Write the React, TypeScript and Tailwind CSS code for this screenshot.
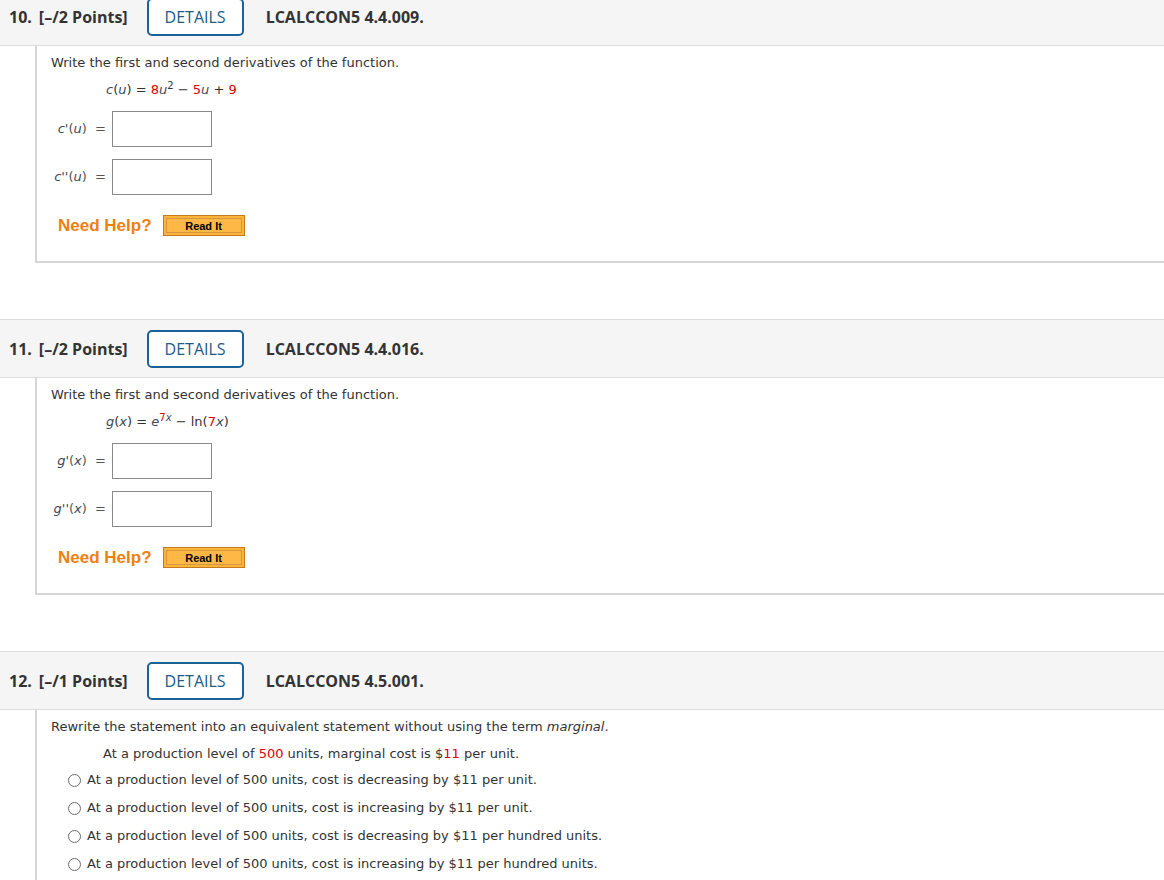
const body = { fontFamily: '"DejaVu Sans", Verdana, sans-serif' }
const head = { fontFamily: '"Open Sans", "Noto Sans", sans-serif' }

function Header({ num, points, code }: { num: string; points: string; code: string }) {
  return (
    <div
      className="h-[59px] flex items-center border-y border-[#dddddd] bg-[#f5f5f5] pl-[9px] text-[16px] font-bold text-[#333333]"
      style={head}
    >
      <span>{num}.</span>
      <span className="ml-[7px]">[–/{points} Points]</span>
      <button className="ml-[19px] h-[38px] w-[97px] rounded-[5px] border-2 border-[#1b6296] bg-white text-[16px] font-medium text-[#1b5a8a]">
        DETAILS
      </button>
      <span className="ml-[22px]">{code}</span>
    </div>
  )
}

function Var({ children }: { children: React.ReactNode }) {
  return <i className="text-[#3d4a5a]">{children}</i>
}

function Red({ children }: { children: React.ReactNode }) {
  return <span className="text-[#e00000]">{children}</span>
}

function AnswerRow({ label }: { label: React.ReactNode }) {
  return (
    <div className="flex items-center">
      <div className="w-[61px] pr-[6px] text-right text-[#555555]">{label}</div>
      <div className="h-[36px] w-[100px] border border-[#8a8a8a] bg-white" />
    </div>
  )
}

function NeedHelp() {
  return (
    <div className="mt-[18px] flex items-center pl-[7px]">
      <span className="text-[17px] font-bold text-[#ee7f11]" style={{ fontFamily: '"Liberation Sans", Arial, sans-serif' }}>
        Need Help?
      </span>
      <button
        className="ml-[11px] h-[21px] w-[82px] border border-[#c57b1c] bg-[#fdb43c] p-[2px]"
        style={{ fontFamily: '"Liberation Sans", Arial, sans-serif' }}
      >
        <div className="flex h-full items-center justify-center border border-[#d89540] bg-[#fdb845] text-[11px] font-bold text-black">
          Read It
        </div>
      </button>
    </div>
  )
}

function DerivQuestion({ fn, first, second }: { fn: React.ReactNode; first: React.ReactNode; second: React.ReactNode }) {
  return (
    <div className="ml-[35px] h-[217px] border-b-2 border-l-2 border-[#d6d6d6] pl-[14px] pt-[8px] text-[13px] text-[#333333]" style={body}>
      <div className="leading-[18px]">Write the first and second derivatives of the function.</div>
      <div className="ml-[55px] mt-[9px] leading-[18px]">{fn}</div>
      <div className="mt-[12px] flex flex-col gap-[12px]">
        <AnswerRow label={first} />
        <AnswerRow label={second} />
      </div>
      <NeedHelp />
    </div>
  )
}

function Radio({ children }: { children: React.ReactNode }) {
  return (
    <div className="flex h-[28px] items-center">
      <span className="ml-[17px] h-[13px] w-[13px] rounded-full border border-[#6b6b6b] bg-white" />
      <span className="ml-[6px]">{children}</span>
    </div>
  )
}

export default function App() {
  return (
    <div className="h-[880px] w-[1164px] overflow-hidden bg-white">
      <div className="-mt-[13px]">
        <Header num="10" points="2" code="LCALCCON5 4.4.009." />
        <DerivQuestion
          fn={
            <>
              <Var>c</Var>(<Var>u</Var>) = <Red>8</Red>
              <Var>u</Var>
              <sup className="text-[10px]">2</sup> − <Red>5</Red>
              <Var>u</Var> + <Red>9</Red>
            </>
          }
          first={
            <>
              <Var>c'</Var>(<Var>u</Var>)&nbsp; =
            </>
          }
          second={
            <>
              <Var>c''</Var>(<Var>u</Var>)&nbsp; =
            </>
          }
        />
        <div className="h-[56px]" />
        <Header num="11" points="2" code="LCALCCON5 4.4.016." />
        <DerivQuestion
          fn={
            <>
              <Var>g</Var>(<Var>x</Var>) = <Var>e</Var>
              <sup className="text-[10px]">
                <Red>7</Red>
                <Var>x</Var>
              </sup>{' '}
              − ln(<Red>7</Red>
              <Var>x</Var>)
            </>
          }
          first={
            <>
              <Var>g'</Var>(<Var>x</Var>)&nbsp; =
            </>
          }
          second={
            <>
              <Var>g''</Var>(<Var>x</Var>)&nbsp; =
            </>
          }
        />
        <div className="h-[56px]" />
        <Header num="12" points="1" code="LCALCCON5 4.5.001." />
        <div className="ml-[35px] h-[200px] border-l-2 border-[#d6d6d6] pl-[14px] pt-[8px] text-[13px] text-[#333333]" style={body}>
          <div className="leading-[18px]">
            Rewrite the statement into an equivalent statement without using the term <i>marginal</i>.
          </div>
          <div className="ml-[52px] mt-[9px] leading-[18px]">
            At a production level of <Red>500</Red> units, marginal cost is $<Red>11</Red> per unit.
          </div>
          <div className="mt-[3px] leading-[18px]">
            <Radio>At a production level of 500 units, cost is decreasing by $11 per unit.</Radio>
            <Radio>At a production level of 500 units, cost is increasing by $11 per unit.</Radio>
            <Radio>At a production level of 500 units, cost is decreasing by $11 per hundred units.</Radio>
            <Radio>At a production level of 500 units, cost is increasing by $11 per hundred units.</Radio>
          </div>
        </div>
      </div>
    </div>
  )
}
